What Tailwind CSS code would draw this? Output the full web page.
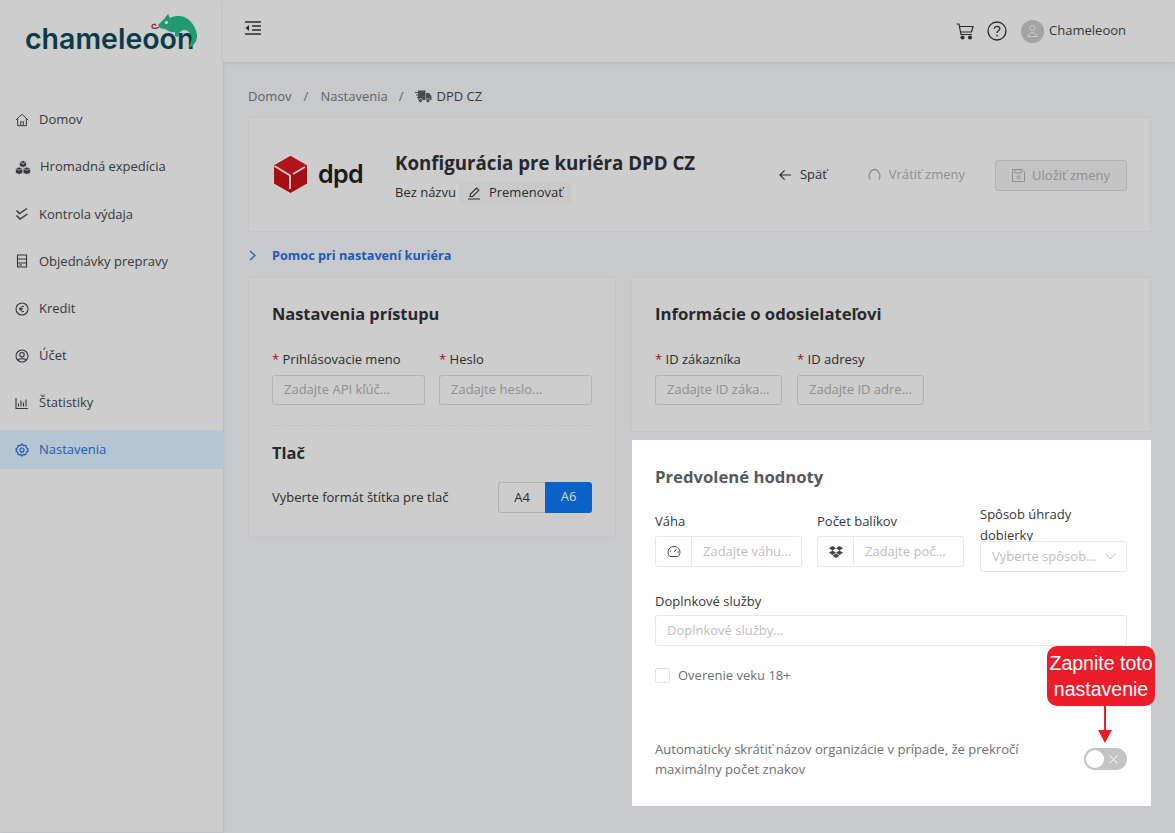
<!DOCTYPE html>
<html lang="en">
<head>
<meta charset="UTF-8">
<title>Chameleoon - DPD CZ</title>
<script src="https://cdn.jsdelivr.net/npm/@tailwindcss/browser@4"></script>
</head>
<body class="relative h-[833px] overflow-hidden bg-[#c8c9cb] font-['Open_Sans',sans-serif] text-[13px] text-[#2b2b2b]">
<div class="flex h-[832px]">

  <!-- sidebar -->
  <aside class="w-[223px] shrink-0 bg-[#cdcdcd] shadow-[1px_0_3px_rgba(0,0,0,0.08)]">
    <div class="relative h-[62px]">
      <span class="absolute left-[25px] top-[21px] font-['Inter',sans-serif] text-[28.5px] leading-[36px] font-semibold text-[#0c3a49]">chameleoon</span>
      <svg class="absolute left-[150px] top-[8px]" width="50" height="45" viewBox="0 0 50 45">
        <path d="M9 19C6 21 2 21 2 18.500S5 15.500 6 17.500" fill="none" stroke="#a3172b" stroke-width="1.300"/>
        <path d="M8 17 14 11 18 6 20 10C32 4 45 12 47 27 47.500 33 44 38 38 40 41 35 42.500 31 41 27 38 21 33 21 30 24L28 29 25 28 25 24C20 25 17 22 15 21 12 21 9 20 8 17Z" fill="#1f9a73"/>
        <circle cx="16.500" cy="14.500" r="1.700" fill="#cdcdcd"/>
      </svg>
    </div>
    <nav class="pt-[34.5px] text-[13px] text-[#33383d]">
      <a class="flex h-[47.15px] items-center pl-[15px]">
        <svg class="mr-[10px] w-[14px]" width="14" height="14" viewBox="0 0 16 16" fill="none" stroke="#33383d" stroke-width="1.1"><path d="M1 8 8 1.500 15 8M3 6.500V14.500H13V6.500M6.500 14.500V10H9.500V14.500"/></svg>Domov</a>
      <a class="flex h-[47.15px] items-center pl-[15px]">
        <svg class="mr-[9px] w-[16px]" width="16" height="15" viewBox="0 0 16 15" fill="#33383d" stroke="#cdcdcd" stroke-width="0.7"><path d="M8 .5 11.500 2V6L8 7.500 4.500 6V2Z"/><path d="M4.200 7 7.900 8.600V12.900L4.200 14.500 .5 12.900V8.600Z"/><path d="M11.800 7 15.500 8.600V12.900L11.800 14.500 8.100 12.900V8.600Z"/><path d="M4.500 2 8 3.500 11.500 2M8 3.500V5M.5 8.600 4.200 10.200 7.900 8.600M8.100 8.600 11.800 10.200 15.500 8.600" fill="none"/></svg>Hromadná expedícia</a>
      <a class="flex h-[47.15px] items-center pl-[15px]">
        <svg class="mr-[10px] w-[14px]" width="14" height="14" viewBox="0 0 14 14" fill="none" stroke="#33383d" stroke-width="1.5"><path d="M1.500 3.500 4.500 6.500 12 1.500M1.500 8.500 5 12 12.500 7"/></svg>Kontrola výdaja</a>
      <a class="flex h-[47.15px] items-center pl-[15px]">
        <svg class="mr-[10px] w-[14px]" width="14" height="14" viewBox="0 0 14 14" fill="none" stroke="#33383d" stroke-width="1.1"><path d="M2.500 1H11.500V13H2.500ZM2.500 5H11.500M2.500 9H11.500"/><path d="M4 11H7" stroke-width="1"/></svg>Objednávky prepravy</a>
      <a class="flex h-[47.15px] items-center pl-[15px]">
        <svg class="mr-[10px] w-[14px]" width="14" height="14" viewBox="0 0 14 14" fill="none" stroke="#33383d" stroke-width="1.1"><circle cx="7" cy="7" r="6"/><path d="M9 4.700C7.300 3.500 5.500 4.800 5.500 7S7.300 10.500 9 9.300M4.200 6.300H7.800M4.200 7.700H7.500" stroke-width="1"/></svg>Kredit</a>
      <a class="flex h-[47.15px] items-center pl-[15px]">
        <svg class="mr-[10px] w-[14px]" width="14" height="14" viewBox="0 0 14 14" fill="none" stroke="#33383d" stroke-width="1.1"><circle cx="7" cy="7" r="6"/><circle cx="7" cy="5.700" r="2.200"/><path d="M3 11C4 9.200 10 9.200 11 11"/></svg>Účet</a>
      <a class="flex h-[47.15px] items-center pl-[15px]">
        <svg class="mr-[10px] w-[14px]" width="14" height="14" viewBox="0 0 14 14" fill="none" stroke="#33383d" stroke-width="1.1"><path d="M1 2V12.500H13M3.500 10.500V7.500M6 10.500V4.500M8.500 10.500V6.500M11 10.500V3.500"/></svg>Štatistiky</a>
      <a class="mt-[4px] flex h-[39px] items-center bg-[#b4c6d1] pl-[15px] text-[#1f58b8]">
        <svg class="mr-[10px] w-[14px]" width="14" height="14" viewBox="0 0 24 24" fill="none" stroke="#1f58b8" stroke-width="2"><circle cx="12" cy="12" r="3.500"/><path d="M12 1.500 14.500 4.500 18.500 4 19.500 8 22.500 10 21 12 22.500 14 19.500 16 18.500 20 14.500 19.500 12 22.500 9.500 19.500 5.500 20 4.500 16 1.500 14 3 12 1.500 10 4.500 8 5.500 4 9.500 4.500Z"/></svg>Nastavenia</a>
    </nav>
  </aside>

  <div class="flex min-w-0 flex-1 flex-col">
    <!-- top bar -->
    <header class="flex h-[62px] shrink-0 items-center bg-[#cdcdcd] pr-[49px] pl-[21px] shadow-[0_1px_3px_rgba(0,0,0,0.1)]">
      <svg class="-mt-[7px]" width="18" height="16" viewBox="0 0 18 16" fill="none" stroke="#2b2b2b" stroke-width="1.3"><path d="M1 2H17M8 6H17M8 10H17M1 14H17"/><path d="M5 5 1.500 8 5 11Z" fill="#2b2b2b" stroke="none"/></svg>
      <div class="ml-auto flex items-center">
        <svg width="18" height="17" viewBox="0 0 18 17" fill="none" stroke="#2b2b2b" stroke-width="1.2"><path d="M.5 1H3L5 11.500H16M3.500 3.500H17L15.500 9H4.500"/><circle cx="6.500" cy="14.500" r="1.500" fill="#2b2b2b"/><circle cx="14" cy="14.500" r="1.500" fill="#2b2b2b"/></svg>
        <svg class="ml-[13px]" width="20" height="20" viewBox="0 0 20 20" fill="none" stroke="#2b2b2b" stroke-width="1.300"><circle cx="10" cy="10" r="9"/><path d="M7.300 7.800C7.300 4.500 12.800 4.700 12.800 7.800 12.800 9.800 10 9.800 10 12"/><path d="M10 13.800V15.300" stroke-width="1.500"/></svg>
        <span class="ml-[14px] flex h-[23px] w-[23px] items-center justify-center rounded-full bg-[#a3a3a3]">
          <svg width="11" height="12" viewBox="0 0 11 12" fill="none" stroke="#cdcdcd" stroke-width="1"><circle cx="5.500" cy="3.200" r="2.500"/><path d="M1 11.500C1 6.500 10 6.500 10 11.500Z"/></svg>
        </span>
        <span class="ml-[5px] -mt-[1px] text-[13px] text-[#33383d]">Chameleoon</span>
      </div>
    </header>

    <!-- content -->
    <main class="flex-1 pr-[24px] pl-[25px]">
      <div class="flex h-[55px] items-center pt-[14px] text-[13px] text-[#5f6265]">
        <span>Domov</span><span class="mx-[12px]">/</span><span>Nastavenia</span><span class="mx-[11px]">/</span>
        <svg class="mr-[5px]" width="17" height="13" viewBox="0 0 17 13" fill="#4a4d50"><path d="M3 .5H10.500V10H3ZM0 2H6V3H0ZM1 4.500H6V5.500H1ZM2 7H6V8H2ZM11 3H14L16.500 6V10H11Z"/><circle cx="5.500" cy="10.500" r="2" stroke="#c8c9cb" stroke-width="0.6"/><circle cx="13" cy="10.500" r="2" stroke="#c8c9cb" stroke-width="0.6"/></svg>
        <span class="text-[#33383d]">DPD CZ</span>
      </div>

      <section class="flex h-[115px] items-center rounded-[2px] border border-[#c4c5c6] bg-[#cdcdcd] pr-[23px] pl-[25px]">
        <svg width="33" height="37" viewBox="0 0 33 37"><path d="M16.500 0 33 9.500V27.500L16.500 37 0 27.500V9.500Z" fill="#a50f14"/><path d="M16.500 0 33 9.500 16.500 19 0 9.500Z" fill="#b4121b"/><path d="M.5 10 16 19.500V33M19 18 31 11" fill="none" stroke="#d2c6c6" stroke-width="2"/></svg>
        <span class="ml-[11px] w-[77px] font-['Inter',sans-serif] text-[25px] leading-none font-semibold tracking-[-0.6px] text-[#1a1a1a]">dpd</span>
        <div class="mt-[6px]">
          <h1 class="text-[18.7px] leading-[24px] font-bold text-[#26282b]">Konfigurácia pre kuriéra DPD CZ</h1>
          <div class="mt-[7px] flex items-center text-[13px]">
            <span>Bez názvu</span>
            <span class="ml-[3px] flex h-[22px] items-center rounded-[3px] bg-[#c9c9c9] px-[8px]">
              <svg class="mr-[8px]" width="14" height="14" viewBox="0 0 14 14" fill="none" stroke="#2b2b2b" stroke-width="1.100"><path d="M1 13H13M3 10.500 3.500 8 9.500 2 11.800 4.300 5.500 10.500Z"/></svg>Premenovať
            </span>
          </div>
        </div>
        <div class="ml-auto flex items-center text-[13px]">
          <svg class="mr-[8px]" width="13" height="12" viewBox="0 0 14 12" fill="none" stroke="#2b2b2b" stroke-width="1.200"><path d="M13 6H1M6 1 1 6 6 11"/></svg>
          <span>Späť</span>
          <svg class="mr-[8px] ml-[41px]" width="13" height="13" viewBox="0 0 13 13" fill="none" stroke="#8f8f8f" stroke-width="1.300"><path d="M2.200 11.500C-.5 7.500 2.500 1.500 6.500 1.500S13.500 7.500 10.800 11.500"/></svg>
          <span class="text-[#8f8f8f]">Vrátiť zmeny</span>
          <span class="ml-[30px] flex h-[31px] w-[132px] translate-y-[1px] items-center justify-center rounded-[3px] border border-[#b2b2b2] bg-[#c4c4c4] text-[#8f8f8f]">
            <svg class="mr-[7px]" width="13" height="13" viewBox="0 0 13 13" fill="none" stroke="#8f8f8f" stroke-width="1"><path d="M.5.500H10L12.500 3V12.500H.5ZM3 .5V4H9V.5"/><circle cx="6.500" cy="8.500" r="1.500"/></svg>Uložiť zmeny
          </span>
        </div>
      </section>

      <div class="flex h-[45px] items-center pt-[2px] text-[12.7px] font-bold text-[#1f58b8]">
        <svg class="mr-[15px]" width="9" height="11" viewBox="0 0 9 11" fill="none" stroke="#1f58b8" stroke-width="1.200"><path d="M2 1 7 5.500 2 10"/></svg>Pomoc pri nastavení kuriéra
      </div>

      <div class="flex gap-[15px]">
        <!-- left column -->
        <section class="h-[260px] w-[368px] shrink-0 rounded-[2px] border border-[#c4c5c6] bg-[#cdcdcd] px-[23px] pt-[24px]">
          <h2 class="text-[16.4px] leading-[24px] font-bold text-[#26282b]">Nastavenia prístupu</h2>
          <div class="mt-[23px] flex gap-[14px]">
            <div class="w-[153px]">
              <label class="block h-[26px] leading-[20px]"><span class="text-[#a50f12]">*</span> Prihlásovacie meno</label>
              <div class="flex h-[30px] items-center rounded-[3px] border border-[#b2b2b2] pl-[11px] text-[#8f8f8f]">Zadajte API kľúč...</div>
            </div>
            <div class="w-[153px]">
              <label class="block h-[26px] leading-[20px]"><span class="text-[#a50f12]">*</span> Heslo</label>
              <div class="flex h-[30px] items-center rounded-[3px] border border-[#b2b2b2] pl-[11px] text-[#8f8f8f]">Zadajte heslo...</div>
            </div>
          </div>
          <div class="mt-[20px] border-t border-dashed border-[#c0c0c0]"></div>
          <h2 class="mt-[15px] text-[16.4px] leading-[24px] font-bold text-[#26282b]">Tlač</h2>
          <div class="mt-[17px] flex items-center justify-between">
            <span>Vyberte formát štítka pre tlač</span>
            <div class="flex h-[31px] w-[94px] text-center leading-[29px]">
              <span class="w-[47px] rounded-l-[3px] border border-r-0 border-[#b2b2b2]">A4</span>
              <span class="w-[47px] rounded-r-[3px] bg-[#0a62c9] text-[#d9d9d9]">A6</span>
            </div>
          </div>
        </section>

        <!-- right column -->
        <div class="min-w-0 flex-1">
          <section class="h-[155px] rounded-[2px] border border-[#c4c5c6] bg-[#cdcdcd] px-[23px] pt-[24px]">
            <h2 class="text-[16.7px] leading-[24px] font-bold text-[#26282b]">Informácie o odosielateľovi</h2>
            <div class="mt-[23px] flex gap-[15px]">
              <div class="w-[127px]">
                <label class="block h-[26px] leading-[20px]"><span class="text-[#a50f12]">*</span> ID zákazníka</label>
                <div class="flex h-[30px] items-center rounded-[3px] border border-[#b2b2b2] pl-[11px] text-[#8f8f8f]">Zadajte ID záka...</div>
              </div>
              <div class="w-[127px]">
                <label class="block h-[26px] leading-[20px]"><span class="text-[#a50f12]">*</span> ID adresy</label>
                <div class="flex h-[30px] items-center rounded-[3px] border border-[#b2b2b2] pl-[11px] text-[#8f8f8f]">Zadajte ID adre...</div>
              </div>
            </div>
          </section>

          <section class="mt-[8px] ml-[1px] h-[366px] bg-white pt-[25px] pr-[24px] pl-[23px] text-[#55595d]">
            <h2 class="text-[16.7px] leading-[24px] font-bold text-[#55595d]">Predvolené hodnoty</h2>
            <div class="mt-[15px] flex">
              <div class="mt-[7px] w-[162px]">
                <label class="block h-[25px] leading-[20px] text-[#33383d]">Váha</label>
                <div class="flex h-[31px] w-[147px]">
                  <span class="flex w-[37px] items-center justify-center rounded-l-[3px] border border-[#e8e8e8]">
                    <svg width="14" height="13" viewBox="0 0 14 13" fill="none" stroke="#444" stroke-width="1"><path d="M3 11.500C-1 8 1.500 1.500 7 1.500S15 8 11 11.500ZM7 7 9.500 4M2.500 6H4M10.500 7H12"/></svg>
                  </span>
                  <span class="flex flex-1 items-center rounded-r-[3px] border border-l-0 border-[#e8e8e8] pl-[11px] text-[#bdbdbd]">Zadajte váhu...</span>
                </div>
              </div>
              <div class="mt-[7px] w-[163px]">
                <label class="block h-[25px] leading-[20px] text-[#33383d]">Počet balíkov</label>
                <div class="flex h-[31px] w-[147px]">
                  <span class="flex w-[37px] items-center justify-center rounded-l-[3px] border border-[#e8e8e8]">
                    <svg width="14" height="12" viewBox="0 0 14 12" fill="#444"><path d="M3.500 0 7 2.200 3.500 4.500 0 2.200ZM10.500 0 14 2.200 10.500 4.500 7 2.200ZM3.500 4.500 7 6.800 3.500 9 0 6.800ZM10.500 4.500 14 6.800 10.500 9 7 6.800ZM3.500 9.800 7 7.500 10.500 9.800 7 12Z"/></svg>
                  </span>
                  <span class="flex flex-1 items-center rounded-r-[3px] border border-l-0 border-[#e8e8e8] pl-[11px] text-[#bdbdbd]">Zadajte poč...</span>
                </div>
              </div>
              <div class="w-[147px]">
                <label class="block h-[37px] leading-[21px] text-[#33383d]">Spôsob úhrady<br>dobierky</label>
                <div class="relative z-10 flex h-[31px] items-center rounded-[3px] border border-[#e8e8e8] bg-white pr-[10px] pl-[11px] text-[#bdbdbd]">
                  <span class="flex-1">Vyberte spôsob...</span>
                  <svg width="11" height="7" viewBox="0 0 11 7" fill="none" stroke="#bdbdbd"><path d="M.5.500 5.500 6 10.500.5"/></svg>
                </div>
              </div>
            </div>
            <label class="mt-[19px] block h-[24px] leading-[20px] text-[#33383d]">Doplnkové služby</label>
            <div class="flex h-[31px] items-center rounded-[3px] border border-[#e8e8e8] pl-[11px] text-[#bdbdbd]">Doplnkové služby...</div>
            <div class="mt-[20px] flex items-center">
              <span class="h-[15px] w-[15px] rounded-[2px] border border-[#e4e4e4]"></span>
              <span class="ml-[8px] text-[#6b6f73]">Overenie veku 18+</span>
            </div>
            <div class="mt-[53px] flex items-center justify-between">
              <p class="w-[380px] text-[13.07px] leading-[20px] text-[#6b6f73]">Automaticky skrátiť názov organizácie v prípade, že prekročí maximálny počet znakov</p>
              <span class="relative h-[22px] w-[43px] rounded-full bg-[#c4c4c4]">
                <span class="absolute top-[2px] left-[2px] h-[18px] w-[18px] rounded-full bg-white"></span>
                <svg class="absolute top-[7px] right-[9px]" width="9" height="9" viewBox="0 0 9 9" fill="none" stroke="white" stroke-width="1"><path d="M.5.500 8.500 8.500M8.500.5 .5 8.500"/></svg>
              </span>
            </div>
          </section>
        </div>
      </div>
    </main>
  </div>
</div>

<!-- annotation over the page -->
<div class="absolute top-[646px] left-[1047px] w-[108px] rounded-[10px] bg-[#ed1c2a] py-[4px] text-center font-['Liberation_Sans',sans-serif] text-[19.5px] leading-[26px] whitespace-nowrap text-white">Zapnite toto<br>nastavenie</div>
<svg class="absolute top-[705px] left-[1098px]" width="14" height="39" viewBox="0 0 14 39"><path d="M6 0H8V25H14L7 38 0 25H6Z" fill="#ed1c2a"/></svg>
</body>
</html>
